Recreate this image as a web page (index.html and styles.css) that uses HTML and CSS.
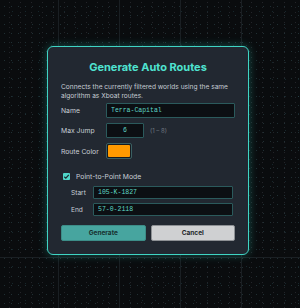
FILE: index.html
```html
<!DOCTYPE html>
<html>
<head>
    <title>Generate Auto Routes</title>
    <link rel="stylesheet" href="styles.css">
</head>
<body>
    <div class="backdrop">
        <!-- Auto routes dialog -->
        <div class="modal">
            <h2 class="modal-title">Generate Auto Routes</h2>
            <p class="modal-desc">Connects the currently filtered worlds using the same algorithm as Xboat routes.</p>

            <div class="row row-name">
                <label class="label">Name</label>
                <input class="field field-wide" type="text" value="Terra-Capital">
            </div>
            <div class="row row-jump">
                <label class="label">Max Jump</label>
                <input class="field field-jump" type="text" value="6">
                <span class="hint">(1 &ndash; 8)</span>
            </div>
            <div class="row row-color">
                <label class="label">Route Color</label>
                <div class="swatch"><div class="swatch-fill"></div></div>
            </div>

            <div class="p2p">
                <div class="check-row">
                    <span class="check">
                        <svg width="7" height="7" viewBox="0 0 7 7"><path d="M1.3 3.8 L2.8 5.2 L5.8 1.8" fill="none" stroke="#1b2a2e" stroke-width="1.2"/></svg>
                    </span>
                    <span class="check-label">Point-to-Point Mode</span>
                </div>
                <div class="row row-sub">
                    <label class="label label-sub">Start</label>
                    <input class="field field-sub" type="text" value="105-K-1827">
                </div>
                <div class="row row-sub row-end">
                    <label class="label label-sub">End</label>
                    <input class="field field-sub" type="text" value="57-0-2118">
                </div>
            </div>

            <div class="actions">
                <button class="btn btn-primary">Generate</button>
                <button class="btn btn-cancel">Cancel</button>
            </div>
        </div>
    </div>
</body>
</html>
```

FILE: styles.css
```css
html, body {
    margin: 0;
    padding: 0;
}

body {
    width: 300px;
    height: 308px;
    overflow: hidden;
    font-family: Inter, "Noto Sans", sans-serif;
    background-color: #0a0c0e;
    background-image:
        linear-gradient(to bottom, transparent 257px, #1b2024 257px, #1b2024 258px, transparent 258px),
        repeating-linear-gradient(to right, transparent 0, transparent 58px, #1a1f23 58px, #1a1f23 59px, transparent 59px, transparent 61px),
        radial-gradient(circle, rgba(70, 110, 120, 0.35) 0.6px, transparent 1px),
        radial-gradient(circle, rgba(90, 90, 100, 0.3) 0.6px, transparent 1px),
        radial-gradient(circle, rgba(50, 100, 110, 0.3) 0.6px, transparent 1px);
    background-size: 100% 100%, 100% 100%, 7px 9px, 11px 5px, 13px 17px;
    background-position: 0 0, 0 0, 1px 2px, 4px 0, 6px 3px;
}

.backdrop {
    display: flex;
    align-items: flex-start;
    padding: 46px 0 0 47px;
}

/* Dialog box */
.modal {
    width: 202px;
    box-sizing: border-box;
    background: #222831;
    border: 1px solid #3fd4c4;
    border-radius: 6px;
    box-shadow: 0 0 10px rgba(45, 210, 190, 0.35);
    padding: 13px 13px 13px 13px;
    color: #c8ced6;
}

.modal-title {
    margin: 0;
    font-size: 11px;
    line-height: 14px;
    font-weight: 700;
    text-align: center;
    color: #4fe3d0;
}

.modal-desc {
    margin: 9px 0 0 0;
    font-size: 6.6px;
    line-height: 9px;
    color: #c5cbd3;
}

.row {
    display: flex;
    align-items: center;
}

.row-name {
    margin-top: 2px;
}

.row-jump {
    margin-top: 5px;
}

.row-color {
    margin-top: 5px;
}

.label {
    width: 45px;
    flex-shrink: 0;
    font-size: 6.8px;
    color: #c8ced6;
}

.field {
    box-sizing: border-box;
    height: 15px;
    background: #0c0f13;
    border: 1px solid #2b5a5c;
    border-radius: 1px;
    color: #5fd6c5;
    font-family: "Liberation Mono", "DejaVu Sans Mono", monospace;
    font-size: 6.5px;
    padding: 0 4px;
    outline: none;
}

.field-wide {
    width: 130px;
}

.field-jump {
    width: 38px;
    text-align: center;
}

.hint {
    margin-left: 6px;
    font-size: 6px;
    color: #6f7780;
}

.swatch {
    box-sizing: border-box;
    width: 26px;
    height: 16px;
    border: 1px solid #3a5f62;
    border-radius: 2px;
    background: #161b20;
    padding: 1px;
}

.swatch-fill {
    width: 100%;
    height: 100%;
    background: #ff9a00;
    border-radius: 1px;
}

/* Point to point section */
.p2p {
    margin-top: 13px;
    padding-left: 2px;
}

.check-row {
    display: flex;
    align-items: center;
}

.check {
    width: 7px;
    height: 7px;
    background: #50d6c9;
    border-radius: 1px;
    display: flex;
    align-items: center;
    justify-content: center;
}

.check-label {
    margin-left: 6px;
    font-size: 6.8px;
    color: #c8ced6;
}

.row-sub {
    margin-top: 5px;
}

.row-end {
    margin-top: 4px;
}

.label-sub {
    box-sizing: content-box;
    width: 22px;
    padding-left: 8px;
    font-size: 6.6px;
}

.field-sub {
    width: 140px;
    height: 13px;
}

.actions {
    display: flex;
    gap: 5px;
    margin-top: 9px;
}

.btn {
    flex: 1;
    height: 16px;
    box-sizing: border-box;
    border-radius: 2px;
    font-family: Inter, "Noto Sans", sans-serif;
    font-size: 6.5px;
    font-weight: 700;
    cursor: pointer;
}

.btn-primary {
    background: #47a59f;
    border: 1px solid #3c8d88;
    color: #17302f;
}

.btn-cancel {
    background: #cfd0d2;
    border: 1px solid #8d9094;
    color: #23272b;
}
```
